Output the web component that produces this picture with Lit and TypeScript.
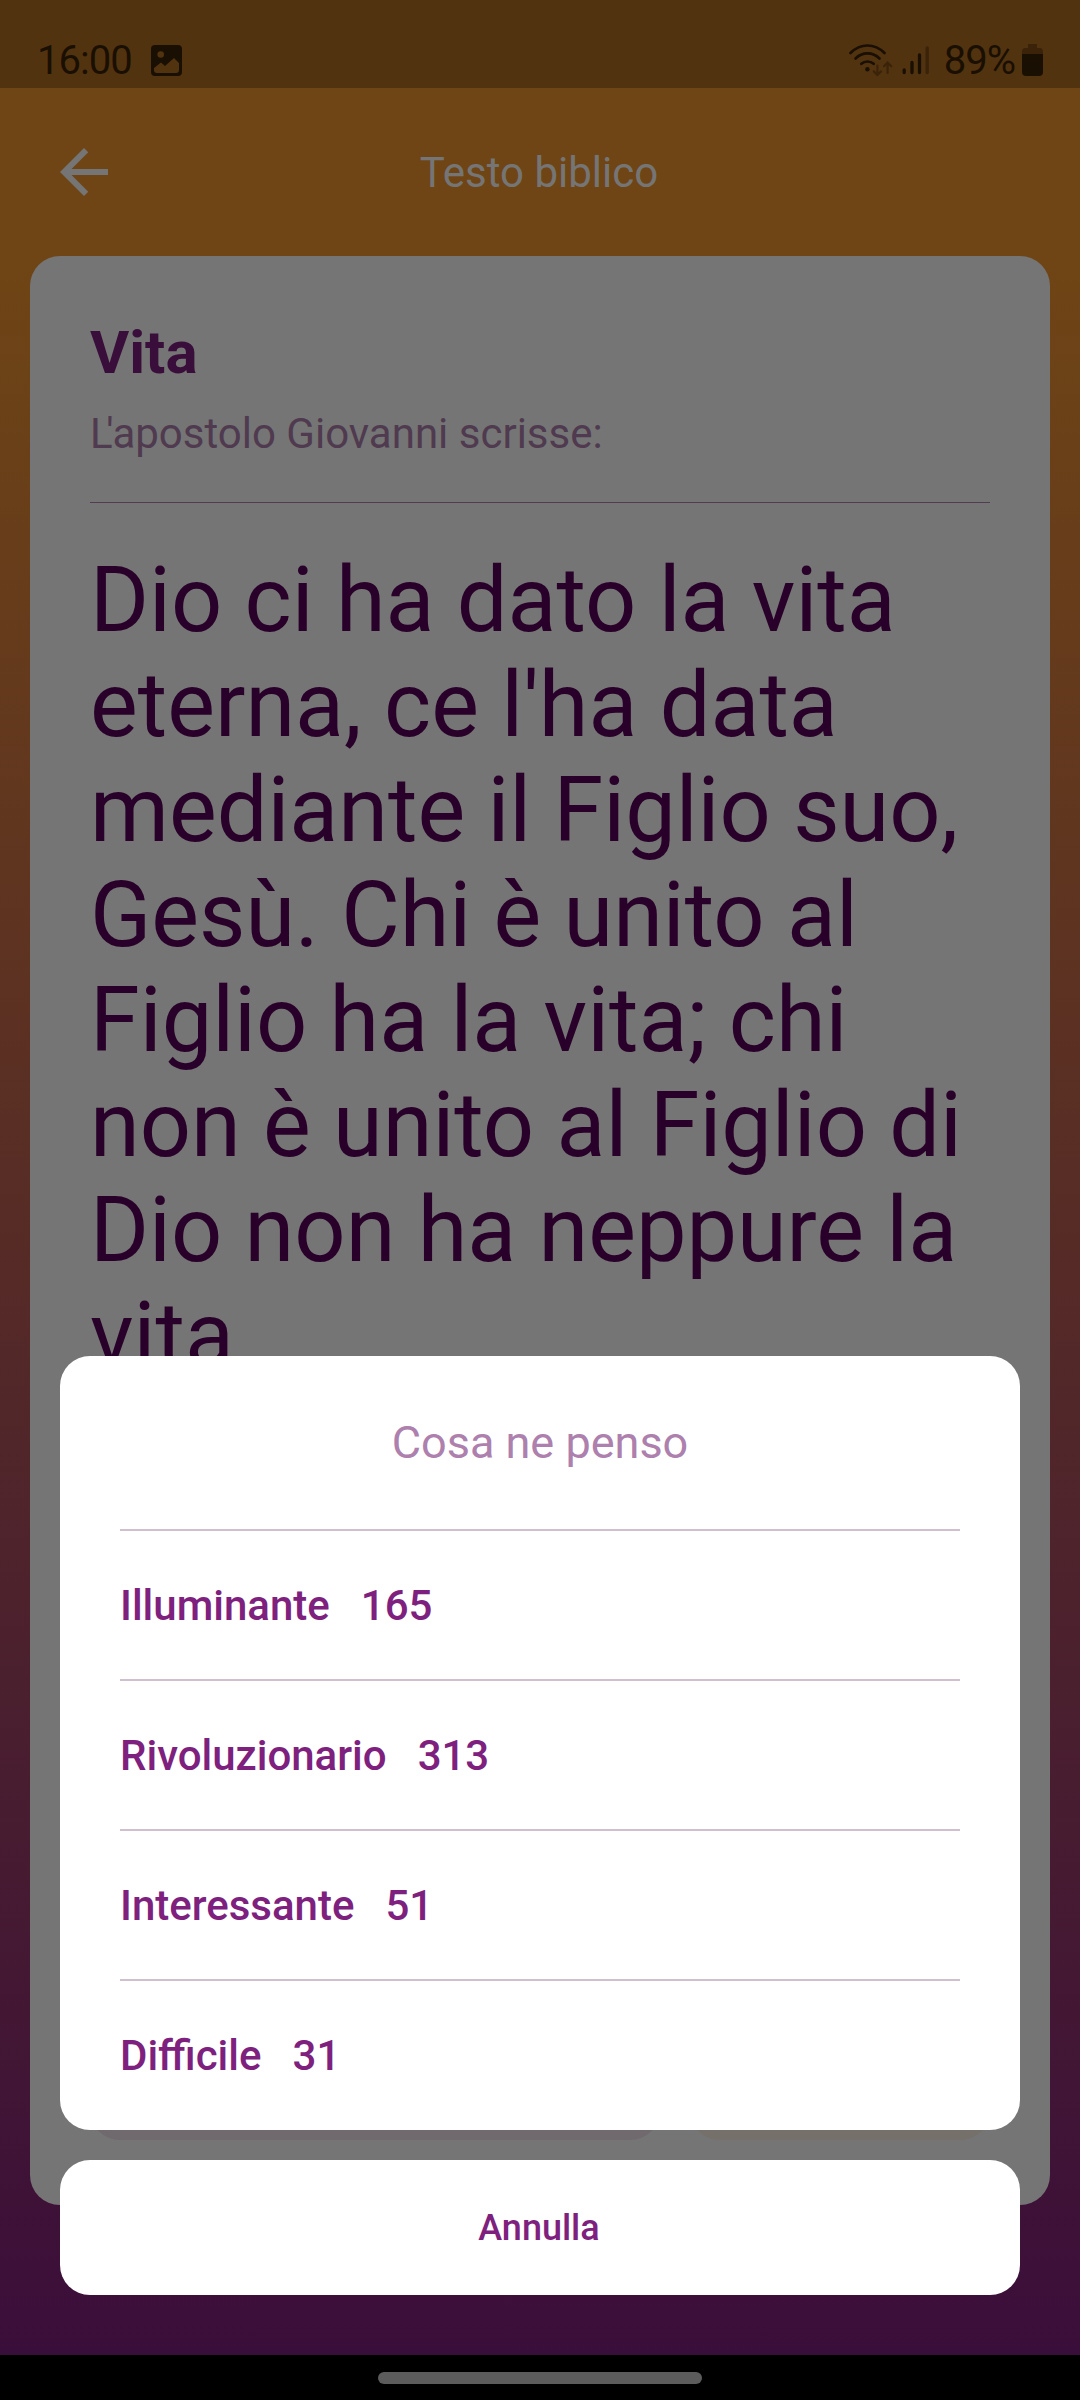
import { LitElement, html, css } from "lit";
import { customElement, property } from "lit/decorators.js";

interface Reaction {
  label: string;
  count: number;
}

const REACTIONS: Reaction[] = [
  { label: "Illuminante", count: 165 },
  { label: "Rivoluzionario", count: 313 },
  { label: "Interessante", count: 51 },
  { label: "Difficile", count: 31 },
];

@customElement("status-bar")
class StatusBar extends LitElement {
  static styles = css`
    :host {
      display: flex;
      box-sizing: border-box;
      height: 88px;
      flex: none;
      padding: 32px 37px 0 37px;
      justify-content: space-between;
      background: #52330f;
      color: #1a0f03;
      font-size: 40px;
      line-height: 56px;
    }
    .side {
      display: flex;
      height: 56px;
      align-items: center;
    }
    .label {
      padding-top: 2px;
      letter-spacing: -1px;
    }
    .picture {
      margin: 1px 0 0 19px;
    }
    .signals {
      margin-right: 14px;
    }
    .battery {
      margin-left: 7px;
    }
    svg {
      display: block;
    }
  `;

  render() {
    return html`
      <div class="side">
        <span class="label">16:00</span>
        <svg class="picture" width="31" height="31" viewBox="0 0 31 31">
          <path
            fill="currentColor"
            fill-rule="evenodd"
            d="M4 0H27Q31 0 31 4V27Q31 31 27 31H4Q0 31 0 27V4Q0 0 4 0ZM9.700 6.200A3.300 3.300 0 1 0 9.700 12.800A3.300 3.300 0 1 0 9.700 6.200ZM3 23V25Q3 28 6 28H25Q28 28 28 25V18L23 13L14 21L10 17.500Z"
          />
        </svg>
      </div>
      <div class="side">
        <svg class="signals" width="81" height="34" viewBox="0 0 81 34" fill="none" stroke-linecap="round">
          <g stroke="#1a0f03" stroke-width="2.700">
            <path d="M1.500 10Q9 2.500 18.500 2.500T35.500 10" />
            <path d="M6.500 15.500Q11.500 10.400 18.500 10.400T30.500 15.500" />
            <path d="M12.300 20.800Q15 18.500 18.500 18.500T24.700 20.800" />
          </g>
          <circle cx="18.400" cy="26.300" r="2.200" fill="#1a0f03" />
          <g stroke="#3b230a" stroke-width="2.200">
            <path d="M28.400 22.500V32M24.800 28.400L28.400 32L32 28.400" />
            <path d="M38.600 30V19.500M35 23.200L38.600 19.500L42.200 23.200" />
          </g>
          <g stroke="#1a0f03" stroke-width="3.300">
            <path d="M55.200 27V29.500M63 19.500V29.500M70.500 12V29.500" />
          </g>
          <path stroke="#3b230a" stroke-width="3.300" d="M78.200 5V29.500" />
        </svg>
        <span class="label">89%</span>
        <svg class="battery" width="21" height="32" viewBox="0 0 21 32">
          <path fill="#3b230a" d="M6 0H15V4H18Q21 4 21 8V12H0V8Q0 4 3 4H6Z" />
          <path fill="#1a0f03" d="M0 10H21V28Q21 32 17 32H4Q0 32 0 28Z" />
        </svg>
      </div>
    `;
  }
}

@customElement("verse-card")
class VerseCard extends LitElement {
  static styles = css`
    :host {
      display: flex;
      flex-direction: column;
      box-sizing: border-box;
      height: 1949px;
      margin: 0 30px;
      padding: 62px 60px 65px;
      border-radius: 30px;
      background: #757575;
    }
    .title {
      color: #3a0e3a;
      font-size: 60px;
      font-weight: 700;
      line-height: 70px;
    }
    .source {
      margin-top: 21px;
      color: #4f3a4f;
      font-size: 42px;
      line-height: 50px;
    }
    .initial {
      letter-spacing: -6.500px;
    }
    .rule {
      height: 1px;
      flex: none;
      margin: 43px 0 45px;
      background: #523c52;
    }
    .verse {
      flex: 1;
      margin: 0;
      color: #29002a;
      font-size: 90px;
      line-height: 105px;
    }
    .actions {
      display: grid;
      grid-template-columns: 570px 300px;
      gap: 30px;
    }
    .action {
      height: 120px;
      border-radius: 30px;
      background: #706a6e;
    }
    .accent {
      background: #75706a;
    }
  `;

  render() {
    return html`
      <div class="title">Vita</div>
      <div class="source"><span class="initial">L</span>'apostolo Giovanni scrisse:</div>
      <div class="rule"></div>
      <p class="verse">
        Dio ci ha dato la vita<br />eterna, ce l'ha data<br />mediante il Figlio suo,<br />Gesù. Chi è unito al<br />Figlio ha la vita;
        chi<br />non è unito al Figlio di<br />Dio non ha neppure la<br />vita
      </p>
      <div class="actions">
        <div class="action"></div>
        <div class="action accent"></div>
      </div>
    `;
  }
}

@customElement("action-sheet")
class ActionSheet extends LitElement {
  @property({ attribute: false }) reactions: Reaction[] = [];

  static styles = css`
    :host {
      display: flex;
      flex-direction: column;
      gap: 30px;
      color: #7e217e;
      font-weight: 500;
    }
    .panel {
      box-sizing: border-box;
      height: 774px;
      padding: 0 60px;
      border-radius: 30px;
      background: #fff;
    }
    .heading {
      height: 173px;
      color: #ad80ad;
      font-size: 45px;
      font-weight: 400;
      line-height: 173px;
      text-align: center;
    }
    .row {
      display: flex;
      box-sizing: border-box;
      height: 150px;
      align-items: center;
      gap: 31px;
      border-top: 2px solid #cfbfcf;
      font-size: 42px;
    }
    .cancel {
      box-sizing: border-box;
      height: 135px;
      padding: 1px 2px 0 0;
      border-radius: 30px;
      background: #fff;
      font-size: 36px;
      line-height: 135px;
      text-align: center;
    }
  `;

  render() {
    return html`
      <div class="panel">
        <div class="heading">Cosa ne penso</div>
        ${this.reactions.map(
          (r) => html`<div class="row"><span>${r.label}</span><span>${r.count}</span></div>`
        )}
      </div>
      <div class="cancel">Annulla</div>
    `;
  }
}

@customElement("app-root")
class AppRoot extends LitElement {
  static styles = css`
    :host {
      display: block;
      font-family: Roboto, sans-serif;
    }
    .screen {
      position: relative;
      display: flex;
      flex-direction: column;
      width: 1080px;
      height: 2400px;
      overflow: hidden;
      background: linear-gradient(#6f4515 256px, #3a0e3a 2355px);
    }
    .toolbar {
      display: grid;
      grid-template-columns: 167px 1fr 169px;
      height: 168px;
      flex: none;
      align-items: center;
      background: #6f4515;
      color: #757575;
      font-size: 42px;
      text-align: center;
    }
    .back {
      display: block;
      margin-left: 60px;
    }
    .spacer {
      flex: 1;
    }
    .nav {
      display: flex;
      height: 45px;
      flex: none;
      align-items: center;
      justify-content: center;
      background: #000;
    }
    .pill {
      width: 324px;
      height: 12px;
      border-radius: 6px;
      background: #5c5c5c;
    }
    .sheet {
      position: absolute;
      left: 60px;
      right: 60px;
      bottom: 105px;
    }
  `;

  render() {
    return html`
      <div class="screen">
        <status-bar></status-bar>
        <div class="toolbar">
          <svg class="back" width="48" height="48" viewBox="4 4 16 16">
            <path fill="#757575" d="M20 11H7.830l5.590-5.590L12 4l-8 8 8 8 1.410-1.410L7.830 13H20v-2z" />
          </svg>
          <span>Testo biblico</span>
        </div>
        <verse-card></verse-card>
        <div class="spacer"></div>
        <div class="nav"><div class="pill"></div></div>
        <action-sheet class="sheet" .reactions=${REACTIONS}></action-sheet>
      </div>
    `;
  }
}
